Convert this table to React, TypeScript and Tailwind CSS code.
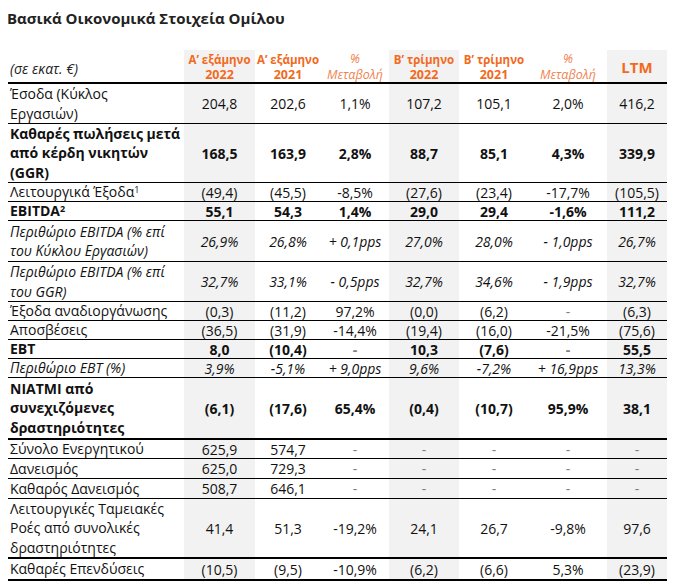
import React from "react";

interface RowData {
  label: React.ReactNode;
  values: string[];
  h: string;
  bold?: boolean;
  italic?: boolean;
  thick?: boolean;
}

const COLS = [
  "w-[71px] bg-[#f2f2f2]",
  "w-[66px]",
  "w-[68px]",
  "w-[70px] bg-[#f2f2f2]",
  "w-[70px]",
  "w-[78px]",
  "w-[60px] bg-[#f2f2f2]",
];

const ROWS: RowData[] = [
  {
    label: (
      <>
        Έσοδα (Κύκλος
        <br />
        Εργασιών)
      </>
    ),
    values: ["204,8", "202,6", "1,1%", "107,2", "105,1", "2,0%", "416,2"],
    h: "h-[40px]",
  },
  {
    label: (
      <>
        Καθαρές πωλήσεις μετά
        <br />
        από κέρδη νικητών
        <br />
        (GGR)
      </>
    ),
    values: ["168,5", "163,9", "2,8%", "88,7", "85,1", "4,3%", "339,9"],
    h: "h-[59px]",
    bold: true,
  },
  {
    label: (
      <>
        Λειτουργικά Έξοδα<sup className="text-[9px]">1</sup>
      </>
    ),
    values: ["(49,4)", "(45,5)", "-8,5%", "(27,6)", "(23,4)", "-17,7%", "(105,5)"],
    h: "h-[19px]",
  },
  {
    label: (
      <>
        EBITDA<sup className="text-[9px]">2</sup>
      </>
    ),
    values: ["55,1", "54,3", "1,4%", "29,0", "29,4", "-1,6%", "111,2"],
    h: "h-[19px]",
    bold: true,
  },
  {
    label: (
      <>
        Περιθώριο EBITDA (% επί
        <br />
        του Κύκλου Εργασιών)
      </>
    ),
    values: ["26,9%", "26,8%", "+ 0,1pps", "27,0%", "28,0%", "- 1,0pps", "26,7%"],
    h: "h-[41px]",
    italic: true,
  },
  {
    label: (
      <>
        Περιθώριο EBITDA (% επί
        <br />
        του GGR)
      </>
    ),
    values: ["32,7%", "33,1%", "- 0,5pps", "32,7%", "34,6%", "- 1,9pps", "32,7%"],
    h: "h-[40px]",
    italic: true,
  },
  {
    label: "Έξοδα αναδιοργάνωσης",
    values: ["(0,3)", "(11,2)", "97,2%", "(0,0)", "(6,2)", "-", "(6,3)"],
    h: "h-[19px]",
  },
  {
    label: "Αποσβέσεις",
    values: ["(36,5)", "(31,9)", "-14,4%", "(19,4)", "(16,0)", "-21,5%", "(75,6)"],
    h: "h-[19px]",
  },
  {
    label: "EBT",
    values: ["8,0", "(10,4)", "-", "10,3", "(7,6)", "-", "55,5"],
    h: "h-[19px]",
    bold: true,
  },
  {
    label: "Περιθώριο EBT (%)",
    values: ["3,9%", "-5,1%", "+ 9,0pps", "9,6%", "-7,2%", "+ 16,9pps", "13,3%"],
    h: "h-[19px]",
    italic: true,
  },
  {
    label: (
      <>
        ΝΙΑΤΜΙ από
        <br />
        συνεχιζόμενες
        <br />
        δραστηριότητες
      </>
    ),
    values: ["(6,1)", "(17,6)", "65,4%", "(0,4)", "(10,7)", "95,9%", "38,1"],
    h: "h-[62px]",
    bold: true,
    thick: true,
  },
  {
    label: "Σύνολο Ενεργητικού",
    values: ["625,9", "574,7", "-", "-", "-", "-", "-"],
    h: "h-[19px]",
  },
  {
    label: "Δανεισμός",
    values: ["625,0", "729,3", "-", "-", "-", "-", "-"],
    h: "h-[20px]",
  },
  {
    label: "Καθαρός Δανεισμός",
    values: ["508,7", "646,1", "-", "-", "-", "-", "-"],
    h: "h-[20px]",
  },
  {
    label: (
      <>
        Λειτουργικές Ταμειακές
        <br />
        Ροές από συνολικές
        <br />
        δραστηριότητες
      </>
    ),
    values: ["41,4", "51,3", "-19,2%", "24,1", "26,7", "-9,8%", "97,6"],
    h: "h-[60px]",
    thick: true,
  },
  {
    label: "Καθαρές Επενδύσεις",
    values: ["(10,5)", "(9,5)", "-10,9%", "(6,2)", "(6,6)", "5,3%", "(23,9)"],
    h: "h-[22px]",
    thick: true,
  },
];

function HeaderCell({ top, bottom, col }: { top: string; bottom: string; col: string }) {
  return (
    <div className={`${col} flex flex-col items-center justify-center whitespace-nowrap font-bold text-[#f26a21] text-[11.5px] leading-[15px] pt-[2px]`}>
      <span>{top}</span>
      <span className="text-[12.5px]">{bottom}</span>
    </div>
  );
}

function PctHeader({ col }: { col: string }) {
  return (
    <div className={`${col} flex flex-col items-center justify-center whitespace-nowrap italic text-[#f0834f] text-[12.5px] leading-[16px] pt-[2px]`}>
      <span>%</span>
      <span>Μεταβολή</span>
    </div>
  );
}

function TableRow({ row }: { row: RowData }) {
  return (
    <div
      className={`flex ${row.h} ${row.thick ? "border-b-2" : "border-b"} border-black text-[14px] ${
        row.bold ? "font-bold" : ""
      } ${row.italic ? "italic" : ""}`}
    >
      <div className="w-[176px] pl-[2px] flex items-center whitespace-nowrap leading-[19.5px]">
        <span>{row.label}</span>
      </div>
      {row.values.map((v, i) => (
        <div
          key={i}
          className={`${COLS[i]} flex items-center justify-center whitespace-nowrap ${
            v === "-" ? "text-[#808080]" : ""
          }`}
        >
          {v}
        </div>
      ))}
    </div>
  );
}

export default function App() {
  return (
    <div
      className="w-[673px] h-[584px] bg-white text-[#111] overflow-hidden"
      style={{ fontFamily: "'Open Sans', 'Noto Sans', sans-serif" }}
    >
      <h1 className="pl-[7px] pt-[7px] h-[50px] text-[15px] font-bold text-[#222]">
        Βασικά Οικονομικά Στοιχεία Ομίλου
      </h1>
      <div className="ml-[8px] w-[659px]">
        <div className="flex h-[34px] border-b-2 border-black">
          <div className="w-[176px] pl-[2px] flex items-center pt-[4px] italic text-[14px] text-[#222]">
            (σε εκατ. €)
          </div>
          <HeaderCell col={COLS[0]} top="Α’ εξάμηνο" bottom="2022" />
          <HeaderCell col={COLS[1]} top="Α’ εξάμηνο" bottom="2021" />
          <PctHeader col={COLS[2]} />
          <HeaderCell col={COLS[3]} top="Β’ τρίμηνο" bottom="2022" />
          <HeaderCell col={COLS[4]} top="Β’ τρίμηνο" bottom="2021" />
          <PctHeader col={COLS[5]} />
          <div className={`${COLS[6]} flex items-center justify-center font-bold text-[#f26a21] text-[15px] pt-[2px]`}>
            LTM
          </div>
        </div>
        {ROWS.map((row, i) => (
          <TableRow key={i} row={row} />
        ))}
      </div>
    </div>
  );
}
